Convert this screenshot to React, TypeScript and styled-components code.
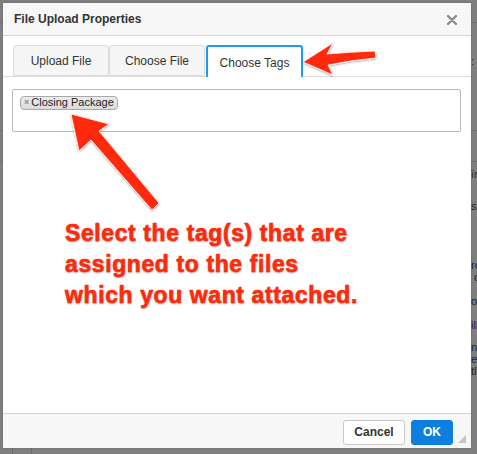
import React from "react";
import styled, { createGlobalStyle } from "styled-components";

const Global = createGlobalStyle`
  html, body { margin: 0; padding: 0; }
  body { font-family: "Liberation Sans", Arial, sans-serif; background: #7f7f7f; overflow: hidden; }
`;

const Page = styled.div`
  position: relative;
  width: 477px;
  height: 454px;
  background: #7f7f7f;
  overflow: hidden;
`;

const BgRightCol = styled.div`
  position: absolute;
  left: 471px;
  top: 0;
  width: 40px;
  height: 454px;
  display: flex;
  flex-direction: column;
  font-size: 11px;
  color: #1d1d33;
`;

const BgLine = styled.div<{ $top: number; $color?: string }>`
  margin-top: ${(p) => p.$top}px;
  height: 12px;
  line-height: 12px;
  white-space: nowrap;
  color: ${(p) => p.$color || "#1d1d33"};
`;

const BgRule = styled.div<{ $top: number }>`
  position: absolute;
  top: ${(p) => p.$top}px;
  left: 0;
  right: 0;
  height: 1px;
  background: #6e6e6e;
`;

const BgVRule = styled.div<{ $left: number }>`
  position: absolute;
  left: ${(p) => p.$left}px;
  top: 448px;
  bottom: 0;
  width: 1px;
  background: #6a6a6a;
`;

const Dialog = styled.div`
  position: absolute;
  left: 3px;
  top: 3px;
  width: 468px;
  height: 445px;
  background: #fff;
  display: flex;
  flex-direction: column;
  box-shadow: 0 0 2px rgba(0, 0, 0, 0.2);
`;

const Header = styled.div`
  height: 33px;
  box-sizing: border-box;
  border-bottom: 1px solid #d4d4d4;
  background: #f7f7f7;
  display: flex;
  align-items: center;
  justify-content: space-between;
  padding: 0 12px 0 11px;
`;

const Title = styled.div`
  font-size: 12px;
  font-weight: bold;
  color: #333;
`;

const Close = styled.svg`
  width: 10px;
  height: 10px;
  margin-right: 2px;
  margin-top: 2px;
`;

const Body = styled.div`
  flex: 1;
  display: flex;
  flex-direction: column;
  padding-top: 9px;
`;

const TabBar = styled.div`
  display: flex;
  padding-left: 10px;
  border-bottom: 1px solid #ddd;
  height: 31px;
`;

const Tab = styled.div<{ $active?: boolean; $w: number }>`
  width: ${(p) => p.$w}px;
  box-sizing: border-box;
  height: ${(p) => (p.$active ? 32 : 31)}px;
  display: flex;
  align-items: center;
  justify-content: center;
  font-size: 12px;
  color: #333;
  background: ${(p) => (p.$active ? "#fff" : "#f5f5f5")};
  border: ${(p) => (p.$active ? "2px solid #1e9bf0" : "1px solid #dcdcdc")};
  border-bottom: ${(p) => (p.$active ? "none" : "1px solid #dcdcdc")};
  border-radius: 3px 3px 0 0;
  margin-left: ${(p) => (p.$active ? 1 : 0)}px;
  padding-top: 1px;
`;

const TagBox = styled.div`
  margin: 12px 10px 0 9px;
  height: 43px;
  box-sizing: border-box;
  border: 1px solid #b9b9b9;
  border-radius: 2px;
  padding: 6px 7px;
  display: flex;
  align-items: flex-start;
`;

const Tag = styled.div`
  display: flex;
  align-items: center;
  height: 14px;
  box-sizing: border-box;
  padding: 0 3px 1px 3px;
  background: linear-gradient(#ececec, #dcdcdc);
  border: 1px solid #a9a9a9;
  border-radius: 4px;
  font-size: 11px;
  color: #222;
  line-height: 11px;
`;

const TagX = styled.span`
  font-size: 9px;
  color: #888;
  font-weight: bold;
  margin-right: 2px;
`;

const Footer = styled.div`
  height: 35px;
  box-sizing: border-box;
  border-top: 1px solid #d4d4d4;
  background: #f7f7f7;
  display: flex;
  align-items: center;
  justify-content: flex-end;
  gap: 6px;
  padding: 0 18px 0 0;
  position: relative;
`;

const Button = styled.button<{ $primary?: boolean; $w: number }>`
  width: ${(p) => p.$w}px;
  height: 25px;
  font-family: "Liberation Sans", Arial, sans-serif;
  font-size: 12px;
  font-weight: bold;
  border-radius: 3px;
  border: 1px solid ${(p) => (p.$primary ? "#0f7fdf" : "#c8c8c8")};
  background: ${(p) => (p.$primary ? "#0f7fdf" : "#fff")};
  color: ${(p) => (p.$primary ? "#fff" : "#333")};
  padding: 0;
  margin-top: 2px;
`;

const Grip = styled.svg`
  position: absolute;
  right: 5px;
  bottom: 5px;
  width: 8px;
  height: 8px;
`;

const Overlay = styled.svg`
  position: absolute;
  left: 0;
  top: 0;
  width: 477px;
  height: 454px;
  pointer-events: none;
`;

const Note = styled.div`
  position: absolute;
  left: 65px;
  top: 218px;
  font-family: "Liberation Sans", Arial, sans-serif;
  font-weight: bold;
  font-size: 23px;
  line-height: 31px;
  color: #ff2a0a;
  -webkit-text-stroke: 0.6px #ff2a0a;
  text-shadow: 0 1px 2px rgba(120, 120, 120, 0.6), 0 0 1px #fff;
  letter-spacing: 0.6px;
  white-space: nowrap;
`;

export default function App() {
  return (
    <Page>
      <Global />
      <BgRule $top={22} />
      <BgRule $top={130} />
      <BgRule $top={161} />
      <BgVRule $left={12} />
      <BgVRule $left={31} />
      <BgRightCol>
        <BgLine $top={55}>:</BgLine>
        <BgLine $top={101} $color="#3a2a40">ïr</BgLine>
        <BgLine $top={20}>si</BgLine>
        <BgLine $top={47}>ro</BgLine>
        <BgLine $top={0}>&nbsp;c</BgLine>
        <BgLine $top={12}>os</BgLine>
        <BgLine $top={12} $color="#1d1d60">ill</BgLine>
        <BgLine $top={10}>n</BgLine>
        <BgLine $top={0}>e</BgLine>
        <BgLine $top={0}>tl</BgLine>
      </BgRightCol>
      <Dialog>
        <Header>
          <Title>File Upload Properties</Title>
          <Close viewBox="0 0 10 10">
            <path d="M1 1 L9 9 M9 1 L1 9" stroke="#8a8a8a" strokeWidth="2.4" strokeLinecap="round" />
          </Close>
        </Header>
        <Body>
          <TabBar>
            <Tab $w={96}>Upload File</Tab>
            <Tab $w={96}>Choose File</Tab>
            <Tab $w={97} $active>Choose Tags</Tab>
          </TabBar>
          <TagBox>
            <Tag>
              <TagX>×</TagX>
              Closing Package
            </Tag>
          </TagBox>
        </Body>
        <Footer>
          <Button $w={62}>Cancel</Button>
          <Button $w={42} $primary>OK</Button>
          <Grip viewBox="0 0 8 8">
            <path d="M8 0 L8 8 L0 8 Z" fill="#c4c4c4" />
          </Grip>
        </Footer>
      </Dialog>
      <Overlay viewBox="0 0 477 454">
        <defs>
          <filter id="sh" x="-20%" y="-20%" width="140%" height="140%">
            <feDropShadow dx="0" dy="1" stdDeviation="1.2" floodColor="#000" floodOpacity="0.35" />
          </filter>
        </defs>
        <path
          d="M303 62 L333 43 L327 54 Q350 52 375 51 L376 58 Q352 60 328 65 L333 75 Z"
          fill="#ff2a0a"
          stroke="#fff"
          strokeWidth="0.8"
          filter="url(#sh)"
        />
        <path
          d="M71 114 L109 124 L99 131 L159 203 L152 210 L91 140 L79 151 Z"
          fill="#ff2a0a"
          stroke="#fff"
          strokeWidth="0.8"
          filter="url(#sh)"
        />
      </Overlay>
      <Note>
        Select the tag(s) that are
        <br />
        assigned to the files
        <br />
        which you want attached.
      </Note>
    </Page>
  );
}
